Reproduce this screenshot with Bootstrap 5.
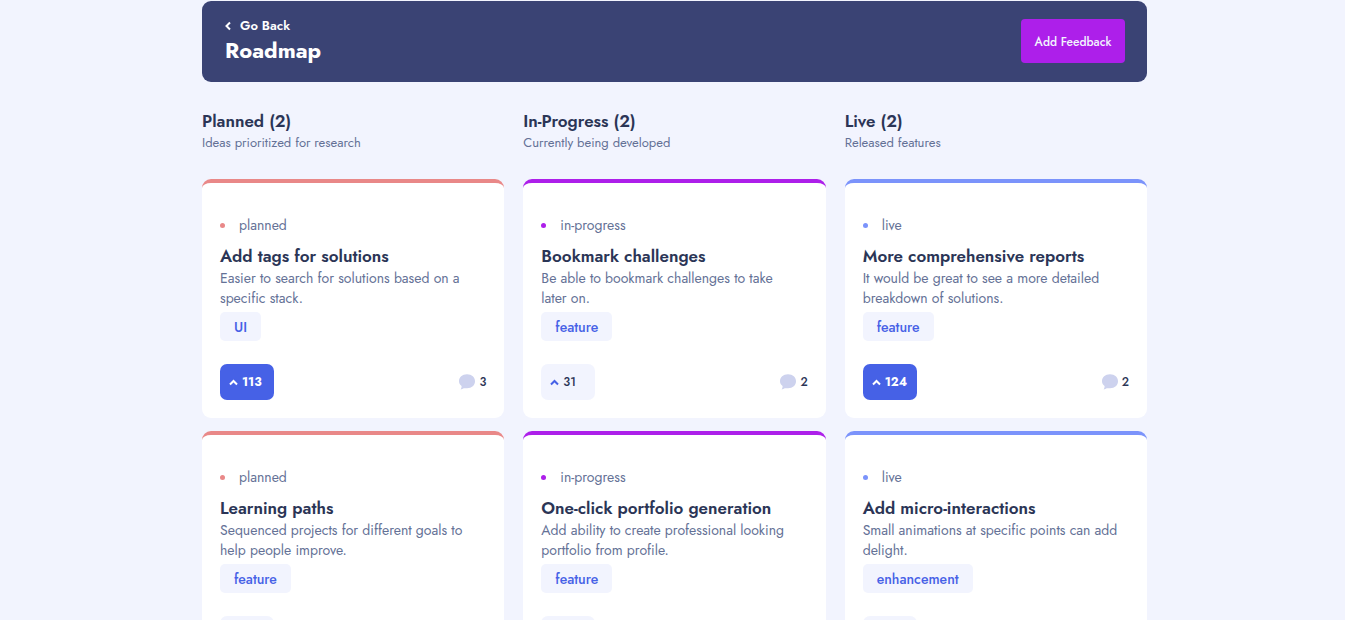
<!DOCTYPE html>
<html lang="en">
<head>
<meta charset="utf-8">
<meta name="viewport" content="width=device-width, initial-scale=1">
<title>Roadmap</title>
<link href="https://cdn.jsdelivr.net/npm/bootstrap@5.3.0/dist/css/bootstrap.min.css" rel="stylesheet">
<style>
  body { font-family: Jost, Lato, sans-serif; font-size: 14px; line-height: 20px; background: #f2f4fe; color: #647196; }
  .page { max-width: 949px; padding: 1px 0 24px 4px; }
  .topbar { background: #3a4374; border-radius: 9px; padding: 15px 22px 18px 23px; }
  .back-link { font-size: 13px; font-weight: 600; color: #fff; gap: 8px; }
  .page-title { font-size: 22px; line-height: 28px; font-weight: 700; }
  .btn-feedback { width: 104px; height: 44px; margin-top: 3px; padding: 2px 0 0; font-size: 12px; font-weight: 500; border: 0; border-radius: 4px; --bs-btn-color: #f2f4fe; --bs-btn-bg: #ad1fea; --bs-btn-hover-color: #fff; --bs-btn-hover-bg: #c75af6; }
  .board { --bs-gutter-x: 19px; --bs-gutter-y: 24px; margin-top: 4px; }
  .stage-title { font-size: 17px; line-height: 22px; font-weight: 600; color: #2b3556; }
  .stage-note { font-size: 13px; line-height: 22px; margin-bottom: 25px; }
  .idea { background: #fff; border: 0 solid var(--stage); border-top-width: 4px; border-radius: 9px; padding: 32px 18px 18px; margin-bottom: 13px; }
  .planned { --stage: #e98888; }
  .in-progress { --stage: #ad1fea; }
  .live { --stage: #7b93fb; }
  .status { gap: 14px; margin-bottom: 9px; }
  .dot { width: 5px; height: 5px; background: var(--stage); }
  .idea-title { font-size: 17px; line-height: 24px; font-weight: 600; color: #2b3556; }
  .idea-text { margin: 0; padding-right: 6px; }
  .tag { background: #f2f4fe; color: #4661e6; border-radius: 5px; padding: 1px 14px 0; font-weight: 500; line-height: 28px; margin: 4px 0 23px; }
  .vote { width: 54px; height: 36px; gap: 4px; padding: 0 9px; font-size: 12px; font-weight: 500; border: 0; border-radius: 7px; --bs-btn-color: #2b3556; --bs-btn-bg: #f2f4fe; --bs-btn-hover-bg: #cfd7ff; --bs-btn-hover-color: #2b3556; }
  .vote svg { color: #4661e6; flex: none; }
  .vote.voted { font-weight: 700; --bs-btn-color: #fff; --bs-btn-bg: #4661e6; }
  .vote.voted svg { color: #fff; }
  .replies { gap: 4px; font-size: 12px; font-weight: 500; color: #2b3556; }
</style>
</head>
<body>
<svg class="d-none">
  <symbol id="chevron-up" viewBox="0 0 9 7"><path d="M1 5.500 4.500 2 8 5.500" fill="none" stroke="currentColor" stroke-width="2"/></symbol>
  <symbol id="bubble" viewBox="0 0 16 16"><path d="M2.600 12C1 10.800 0 9.200 0 7.200 0 3.300 3.200.200 8 .200s8 3.100 8 7-3.200 7-8 7H4.700c-.8.700-1.800 1.200-3.100 1.300.6-.9 1-2.200 1-3.500z" fill="#cdd2ee"/></symbol>
</svg>
<div class="page mx-auto">
  <header class="topbar d-flex justify-content-between align-items-start">
    <div>
      <a href="#" class="back-link d-flex align-items-center text-decoration-none">
        <svg width="7" height="10" viewBox="0 0 7 10" aria-hidden="true"><path d="M5 1.500 1.500 5 5 8.500" fill="none" stroke="#fff" stroke-width="2"/></svg>Go Back
      </a>
      <h1 class="page-title text-white mb-0">Roadmap</h1>
    </div>
    <button type="button" class="btn btn-feedback">Add Feedback</button>
  </header>
  <main class="row row-cols-1 row-cols-md-3 board">
    <section class="col planned">
      <h2 class="stage-title mb-0">Planned (2)</h2>
      <p class="stage-note">Ideas prioritized for research</p>
      <article class="idea">
        <div class="status d-flex align-items-center"><span class="dot rounded-circle"></span>planned</div>
        <h3 class="idea-title mb-0">Add tags for solutions</h3>
        <p class="idea-text">Easier to search for solutions based on a specific stack.</p>
        <span class="tag d-inline-block">UI</span>
        <div class="d-flex justify-content-between align-items-center">
          <button type="button" class="btn vote voted d-flex align-items-center"><svg width="9" height="7" aria-hidden="true"><use href="#chevron-up"/></svg>113</button>
          <span class="replies d-flex align-items-center"><svg width="16" height="16" aria-hidden="true"><use href="#bubble"/></svg>3</span>
        </div>
      </article>
      <article class="idea">
        <div class="status d-flex align-items-center"><span class="dot rounded-circle"></span>planned</div>
        <h3 class="idea-title mb-0">Learning paths</h3>
        <p class="idea-text">Sequenced projects for different goals to help people improve.</p>
        <span class="tag d-inline-block">feature</span>
        <div class="d-flex justify-content-between align-items-center">
          <button type="button" class="btn vote d-flex align-items-center"><svg width="9" height="7" aria-hidden="true"><use href="#chevron-up"/></svg>28</button>
          <span class="replies d-flex align-items-center"><svg width="16" height="16" aria-hidden="true"><use href="#bubble"/></svg>1</span>
        </div>
      </article>
    </section>
    <section class="col in-progress">
      <h2 class="stage-title mb-0">In-Progress (2)</h2>
      <p class="stage-note">Currently being developed</p>
      <article class="idea">
        <div class="status d-flex align-items-center"><span class="dot rounded-circle"></span>in-progress</div>
        <h3 class="idea-title mb-0">Bookmark challenges</h3>
        <p class="idea-text">Be able to bookmark challenges to take later on.</p>
        <span class="tag d-inline-block">feature</span>
        <div class="d-flex justify-content-between align-items-center">
          <button type="button" class="btn vote d-flex align-items-center"><svg width="9" height="7" aria-hidden="true"><use href="#chevron-up"/></svg>31</button>
          <span class="replies d-flex align-items-center"><svg width="16" height="16" aria-hidden="true"><use href="#bubble"/></svg>2</span>
        </div>
      </article>
      <article class="idea">
        <div class="status d-flex align-items-center"><span class="dot rounded-circle"></span>in-progress</div>
        <h3 class="idea-title mb-0">One-click portfolio generation</h3>
        <p class="idea-text">Add ability to create professional looking portfolio from profile.</p>
        <span class="tag d-inline-block">feature</span>
        <div class="d-flex justify-content-between align-items-center">
          <button type="button" class="btn vote d-flex align-items-center"><svg width="9" height="7" aria-hidden="true"><use href="#chevron-up"/></svg>62</button>
          <span class="replies d-flex align-items-center"><svg width="16" height="16" aria-hidden="true"><use href="#bubble"/></svg>1</span>
        </div>
      </article>
    </section>
    <section class="col live">
      <h2 class="stage-title mb-0">Live (2)</h2>
      <p class="stage-note">Released features</p>
      <article class="idea">
        <div class="status d-flex align-items-center"><span class="dot rounded-circle"></span>live</div>
        <h3 class="idea-title mb-0">More comprehensive reports</h3>
        <p class="idea-text">It would be great to see a more detailed breakdown of solutions.</p>
        <span class="tag d-inline-block">feature</span>
        <div class="d-flex justify-content-between align-items-center">
          <button type="button" class="btn vote voted d-flex align-items-center"><svg width="9" height="7" aria-hidden="true"><use href="#chevron-up"/></svg>124</button>
          <span class="replies d-flex align-items-center"><svg width="16" height="16" aria-hidden="true"><use href="#bubble"/></svg>2</span>
        </div>
      </article>
      <article class="idea">
        <div class="status d-flex align-items-center"><span class="dot rounded-circle"></span>live</div>
        <h3 class="idea-title mb-0">Add micro-interactions</h3>
        <p class="idea-text">Small animations at specific points can add delight.</p>
        <span class="tag d-inline-block">enhancement</span>
        <div class="d-flex justify-content-between align-items-center">
          <button type="button" class="btn vote d-flex align-items-center"><svg width="9" height="7" aria-hidden="true"><use href="#chevron-up"/></svg>71</button>
          <span class="replies d-flex align-items-center"><svg width="16" height="16" aria-hidden="true"><use href="#bubble"/></svg>2</span>
        </div>
      </article>
    </section>
  </main>
</div>
<script src="https://cdn.jsdelivr.net/npm/bootstrap@5.3.0/dist/js/bootstrap.bundle.min.js"></script>
</body>
</html>
